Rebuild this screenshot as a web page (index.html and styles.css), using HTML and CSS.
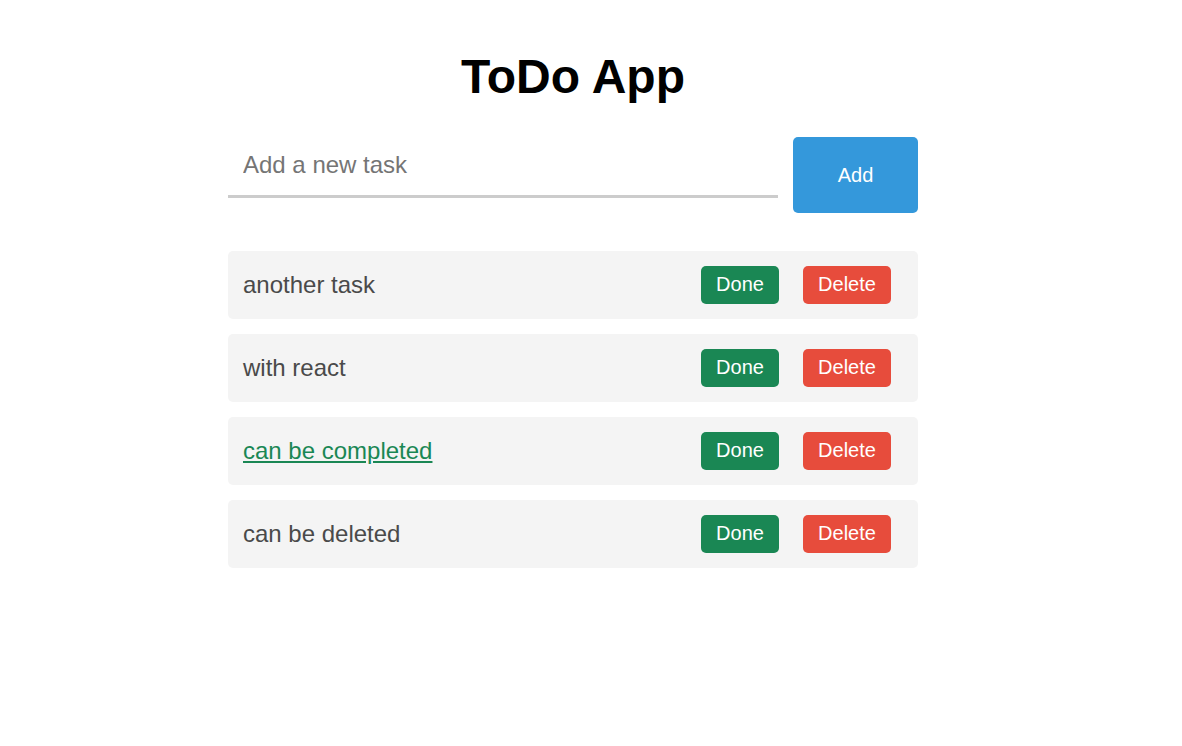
FILE: index.html
```html
<!DOCTYPE html>
<html lang="en">
<head>
<meta charset="utf-8">
<title>ToDo App</title>
<link rel="stylesheet" href="styles.css">
</head>
<body>
<div class="app">
  <h1 class="title">ToDo App</h1>
  <form class="add-form">
    <input class="add-input" type="text" placeholder="Add a new task">
    <button class="add-btn" type="button">Add</button>
  </form>
  <ul class="list">
    <li class="item">
      <span class="item-text">another task</span>
      <div class="actions"><button class="btn btn-done">Done</button><button class="btn btn-delete">Delete</button></div>
    </li>
    <li class="item">
      <span class="item-text">with react</span>
      <div class="actions"><button class="btn btn-done">Done</button><button class="btn btn-delete">Delete</button></div>
    </li>
    <li class="item">
      <span class="item-text completed">can be completed</span>
      <div class="actions"><button class="btn btn-done">Done</button><button class="btn btn-delete">Delete</button></div>
    </li>
    <li class="item">
      <span class="item-text">can be deleted</span>
      <div class="actions"><button class="btn btn-done">Done</button><button class="btn btn-delete">Delete</button></div>
    </li>
  </ul>
</div>
</body>
</html>
```

FILE: styles.css
```css
* { box-sizing: border-box; }

html, body {
  margin: 0;
  padding: 0;
  background: #ffffff;
  font-family: "Liberation Sans", Arial, sans-serif;
}

.app {
  width: 690px;
  margin: 0 0 0 228px;
  padding-top: 49px;
}

.title {
  margin: 0;
  text-align: center;
  font-size: 48px;
  line-height: 56px;
  font-weight: bold;
  color: #000;
}

.add-form {
  display: flex;
  align-items: flex-start;
  gap: 15px;
  margin-top: 32px;
}

.add-input {
  flex: 1;
  height: 61px;
  padding: 0 15px 2px;
  border: none;
  border-bottom: 3px solid #cccccc;
  outline: none;
  font-family: "Liberation Sans", Arial, sans-serif;
  font-size: 24px;
  color: #333;
  background: transparent;
}

.add-input::placeholder { color: #757575; }

.add-btn {
  width: 125px;
  height: 76px;
  border: none;
  border-radius: 5px;
  background: #3498db;
  color: #fff;
  font-family: "Liberation Sans", Arial, sans-serif;
  font-size: 20px;
  padding: 0;
}

.list {
  list-style: none;
  margin: 38px 0 0;
  padding: 0;
  display: flex;
  flex-direction: column;
  gap: 15px;
}

.item {
  display: flex;
  align-items: center;
  justify-content: space-between;
  height: 68px;
  padding: 0 27px 0 15px;
  background: #f4f4f4;
  border-radius: 5px;
}

.item-text {
  font-size: 24px;
  color: #4a4a4a;
}

.item-text.completed {
  color: #1a8754;
  text-decoration: underline;
}

.actions {
  display: flex;
  gap: 24px;
}

.btn {
  height: 38px;
  border: none;
  border-radius: 5px;
  color: #fff;
  font-family: "Liberation Sans", Arial, sans-serif;
  font-size: 20px;
  padding: 0 0 2px;
}

.btn-done { width: 78px; background: #1a8754; }
.btn-delete { width: 88px; background: #e74c3c; }
```
